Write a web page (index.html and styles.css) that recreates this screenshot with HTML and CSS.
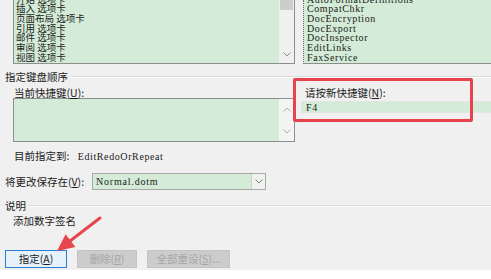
FILE: index.html
```html
<!DOCTYPE html>
<html lang="zh-CN">
<head>
<meta charset="utf-8">
<title>自定义键盘</title>
<link rel="stylesheet" href="styles.css">
</head>
<body>
<div class="dialog">
  <div class="top">
    <div class="listbox top-left">
      <div class="rows cjk-list">
        <div class="row">开始 选项卡</div>
        <div class="row">插入 选项卡</div>
        <div class="row">页面布局 选项卡</div>
        <div class="row">引用 选项卡</div>
        <div class="row">邮件 选项卡</div>
        <div class="row">审阅 选项卡</div>
        <div class="row">视图 选项卡</div>
      </div>
      <div class="vscroll">
        <div class="thumb"></div>
        <svg class="chev" width="8" height="5" viewBox="0 0 8 5"><polyline points="0.5,0.5 4,4 7.5,0.5" fill="none" stroke="#8a8a8a" stroke-width="1"/></svg>
      </div>
    </div>
    <div class="listbox top-right">
      <div class="rows mono-list">
        <div class="row">AutoFormatDefinitions</div>
        <div class="row">CompatChkr</div>
        <div class="row">DocEncryption</div>
        <div class="row">DocExport</div>
        <div class="row">DocInspector</div>
        <div class="row">EditLinks</div>
        <div class="row">FaxService</div>
      </div>
    </div>
  </div>

  <div class="group-title first"><span>指定键盘顺序</span><i class="rule"></i></div>

  <div class="keys">
    <div class="cur">
      <div class="label">当前快捷键(<u>U</u>):</div>
      <div class="listbox cur-list">
        <div class="fill"></div>
        <div class="vscroll2">
          <svg class="chev" width="8" height="5" viewBox="0 0 8 5"><polyline points="0.5,4.5 4,1 7.5,4.5" fill="none" stroke="#b0b0b0" stroke-width="1"/></svg>
          <svg class="chev" width="8" height="5" viewBox="0 0 8 5"><polyline points="0.5,0.5 4,4 7.5,0.5" fill="none" stroke="#b0b0b0" stroke-width="1"/></svg>
        </div>
      </div>
    </div>
    <div class="new">
      <div class="label">请按新快捷键(<u>N</u>):</div>
      <div class="input"><span class="mono">F4</span></div>
    </div>
  </div>

  <div class="assigned">目前指定到: <span class="mono">EditRedoOrRepeat</span></div>

  <div class="save-row">
    <span class="save-label">将更改保存在(<u>V</u>):</span>
    <div class="combo">
      <span class="mono combo-text">Normal.dotm</span>
      <span class="drop"><svg width="8" height="5" viewBox="0 0 8 5"><polyline points="0.5,0.5 4,4 7.5,0.5" fill="none" stroke="#808080" stroke-width="1"/></svg></span>
    </div>
  </div>

  <div class="group-title second"><span>说明</span><i class="rule"></i></div>
  <div class="desc">添加数字签名</div>

  <div class="buttons">
    <button class="btn primary">指定(<u>A</u>)</button>
    <button class="btn disabled w60">删除(<u>R</u>)</button>
    <button class="btn disabled w83">全部重设(<u>S</u>)...</button>
  </div>

  <div class="redbox"></div>
  <svg class="arrow" width="60" height="50" viewBox="50 210 60 50">
    <line x1="100" y1="218" x2="70" y2="241" stroke="#e8464d" stroke-width="3" stroke-linecap="round"/>
    <polygon points="57,251 65.6,234.3 75.4,246.9" fill="#e8464d"/>
  </svg>
</div>
</body>
</html>
```

FILE: styles.css
```css
* { box-sizing: border-box; }

html, body {
  margin: 0;
  padding: 0;
  background: #ffffff;
}

.dialog {
  position: relative;
  width: 491px;
  height: 270px;
  background: #f0f0f0;
  overflow: hidden;
  font-family: "Noto Sans CJK SC", "Noto Sans", sans-serif;
  font-size: 10.5px;
  color: #1b1b1b;
  padding-bottom: 2px;
}

.mono {
  font-family: "Liberation Serif", "DejaVu Serif", serif;
  font-size: 10px;
  letter-spacing: 0.6px;
}

u { text-decoration: underline; text-underline-offset: 1px; text-decoration-thickness: 1px; }

/* top lists */
.top {
  display: flex;
  height: 64px;
}

.listbox {
  background: #d4ecd7;
  border: 1px solid #8e8e8e;
}

.top-left {
  flex: none;
  margin-left: 13px;
  width: 282px;
  height: 64px;
  border-top: none;
  display: flex;
}

.rows {
  flex: 1;
  display: flex;
  flex-direction: column;
  justify-content: flex-end;
  overflow: hidden;
  padding-bottom: 0.5px;
}

.row {
  height: 9.7px;
  line-height: 9.7px;
  white-space: nowrap;
  flex: none;
}

.cjk-list {
  padding-left: 2px;
  font-size: 9.5px;
}

.mono-list {
  padding-left: 3px;
  font-family: "Liberation Serif", "DejaVu Serif", serif;
  font-size: 10px;
  letter-spacing: 0.6px;
}

.vscroll {
  width: 15px;
  background: #f0f0f0;
  display: flex;
  flex-direction: column;
  align-items: center;
  justify-content: space-between;
  padding-bottom: 6px;
}

.thumb {
  width: 13px;
  height: 10px;
  background: #cdcdcd;
}

.chev { display: block; }

.top-right {
  flex: none;
  margin-left: 8px;
  width: 220px;
  height: 64px;
  border-top: none;
  border-left: 1px dotted #707070;
  display: flex;
}

/* group titles */
.group-title {
  display: flex;
  align-items: center;
  height: 14px;
  padding-left: 5px;
  line-height: 14px;
}

.group-title.first { margin-top: 6px; }
.group-title.second { margin-top: 9px; }

.group-title .rule {
  flex: 1;
  height: 2px;
  margin-left: 2px;
  border-top: 1px solid #dcdcdc;
  border-bottom: 1px solid #fbfbfb;
}

/* keys area */
.keys {
  display: flex;
  margin-top: 4px;
}

.label {
  height: 10px;
  line-height: 10px;
  white-space: nowrap;
}

.cur {
  flex: none;
  margin-left: 13px;
  width: 282px;
}

.cur .label { padding-left: 1px; }

.cur-list {
  height: 44px;
  display: flex;
}

.cur-list .fill { flex: 1; }

.vscroll2 {
  width: 15px;
  background: #f4f4f4;
  display: flex;
  flex-direction: column;
  align-items: center;
  justify-content: space-between;
  padding: 8px 0 7px;
}

.new {
  margin-left: 5px;
  flex: 1;
  min-width: 0;
}

.new .label { padding-left: 5px; }

.input {
  margin-top: 3px;
  margin-left: 1px;
  width: 200px;
  height: 12px;
  border: 1px solid #e4e4e4;
  background: #d4ecd7;
  line-height: 10px;
  padding-left: 4px;
}

/* assigned */
.assigned {
  margin-top: 8px;
  padding-left: 14px;
  height: 11px;
  line-height: 11px;
  white-space: nowrap;
}

.assigned .mono { margin-left: 6px; }

/* save row */
.save-row {
  margin-top: 12px;
  display: flex;
  align-items: center;
  height: 17px;
  padding-left: 5px;
}

.save-label {
  flex: none;
  width: 87px;
  white-space: nowrap;
}

.combo {
  flex: none;
  width: 174px;
  height: 17px;
  border: 1px solid #a9a9a9;
  background: #d4ecd7;
  display: flex;
  align-items: center;
}

.combo-text {
  flex: 1;
  padding-left: 3px;
  letter-spacing: 0.8px;
}

.drop {
  width: 14px;
  height: 15px;
  background: #eef3ee;
  border-left: 1px solid #d0d0d0;
  display: flex;
  align-items: center;
  justify-content: center;
}

/* description */
.desc {
  margin-top: 2px;
  padding-left: 13px;
  height: 12px;
  line-height: 12px;
}

/* buttons */
.buttons {
  margin-top: 23px;
  padding-left: 5px;
  display: flex;
  gap: 10px;
}

.btn {
  flex: none;
  height: 18px;
  width: 62px;
  padding: 0;
  font-family: "Noto Sans CJK SC", "Noto Sans", sans-serif;
  font-size: 10.5px;
  line-height: 16px;
  text-align: center;
}

.btn.primary {
  background: #e5f1fb;
  border: 1px solid #2a7fd4;
  color: #1b1b1b;
}

.btn.disabled {
  background: #cccccc;
  border: 1px solid #c4c4c4;
  color: #a6a6a6;
}

.btn.w60 { width: 60px; }
.btn.w83 { width: 83px; }

/* annotations */
.redbox {
  position: absolute;
  left: 293px;
  top: 78px;
  width: 180px;
  height: 44px;
  border: 3.5px solid #e8424c;
  border-radius: 2px;
}

.arrow {
  position: absolute;
  left: 50px;
  top: 210px;
}
```
